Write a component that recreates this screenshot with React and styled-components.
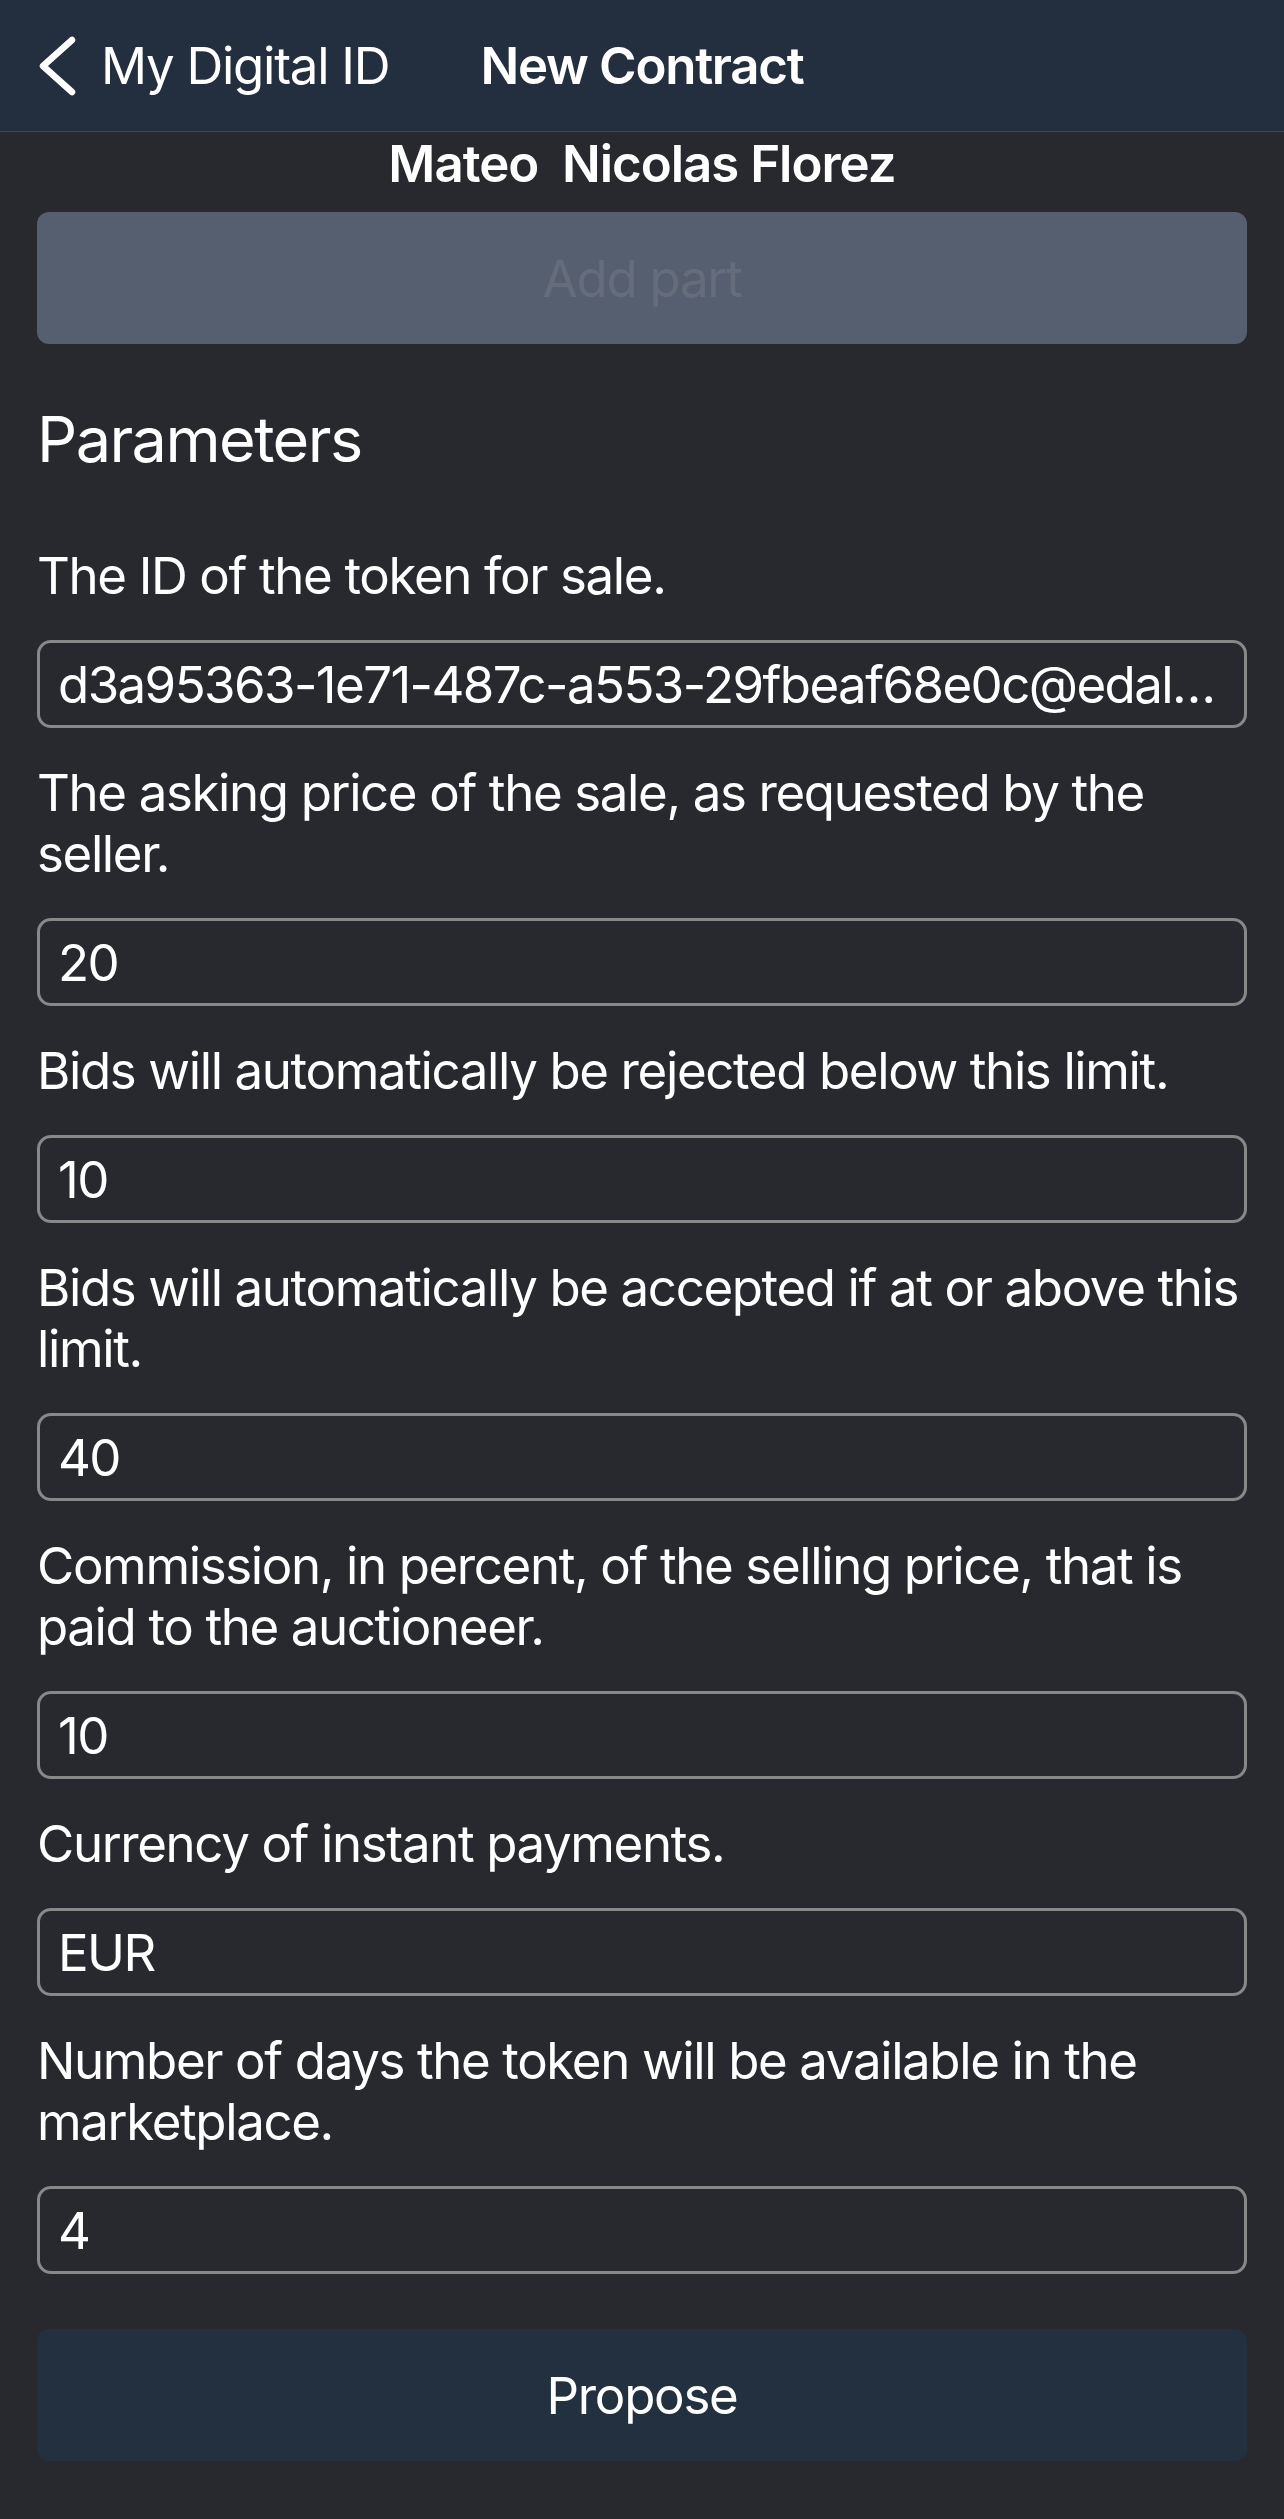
import React from "react";
import styled, { createGlobalStyle } from "styled-components";

const Global = createGlobalStyle`
  html, body { margin: 0; padding: 0; background: #28292f; }
  body { font-family: Inter, "Noto Sans", "Liberation Sans", sans-serif; -webkit-font-smoothing: antialiased; }
  * { box-sizing: border-box; }
`;

const Page = styled.div`
  width: 1284px;
  min-height: 2519px;
  background: #28292f;
  color: #ffffff;
  display: flex;
  flex-direction: column;
`;

const NavBar = styled.header`
  height: 132px;
  background: #232e3e;
  border-bottom: 1px solid #3b4250;
  display: grid;
  grid-template-columns: 1fr auto 1fr;
  align-items: center;
`;

const BackButton = styled.div`
  display: flex;
  align-items: center;
  gap: 24px;
  padding-left: 37px;
  font-size: 51px;
  letter-spacing: -0.025em;
  color: #ffffff;
  white-space: nowrap;
`;

const Title = styled.h1`
  margin: 0;
  font-size: 51px;
  font-weight: 600;
  letter-spacing: -0.025em;
  color: #ffffff;
  white-space: nowrap;
`;

const Content = styled.main`
  display: flex;
  flex-direction: column;
  padding: 1px 37px 56px 37px;
`;

const Name = styled.div`
  font-size: 51px;
  font-weight: 600;
  line-height: 61px;
  letter-spacing: -0.02em;
  text-align: center;
  white-space: pre;
  margin-bottom: 18px;
`;

const WideButton = styled.button`
  height: 132px;
  width: 100%;
  border: none;
  border-radius: 12px;
  font-family: inherit;
  font-size: 51px;
  letter-spacing: -0.025em;
  background: ${(p) => (p.$disabled ? "#565f6f" : "#22303f")};
  color: ${(p) => (p.$disabled ? "#666d7a" : "#ffffff")};
`;

const SectionTitle = styled.h2`
  margin: 59px 0 70px 0;
  font-size: 63px;
  line-height: 72px;
  font-weight: 400;
  letter-spacing: -0.025em;
`;

const Fields = styled.div`
  display: flex;
  flex-direction: column;
  gap: 34px;
`;

const Field = styled.div`
  display: flex;
  flex-direction: column;
  gap: 34px;
`;

const Label = styled.div`
  font-size: 51px;
  line-height: 61px;
  letter-spacing: -0.027em;
  color: #ffffff;
`;

const Input = styled.input`
  height: 88px;
  width: 100%;
  border: 3px solid #888888;
  border-radius: 14px;
  background: transparent;
  color: #ffffff;
  font-family: inherit;
  font-size: 51px;
  letter-spacing: -0.031em;
  padding: 0 14px 0 18px;
  text-overflow: ellipsis;
  outline: none;
`;

const Footer = styled.div`
  margin-top: 55px;
`;

const Chevron = () => (
  <svg width="40" height="60" viewBox="0 0 40 60" fill="none">
    <path d="M35 4 L6 30 L35 56" stroke="#ffffff" strokeWidth="6.5" strokeLinecap="round" strokeLinejoin="round" />
  </svg>
);

const fields = [
  { label: "The ID of the token for sale.", value: "d3a95363-1e71-487c-a553-29fbeaf68e0c@edaler.lab.tagroot.io" },
  { label: "The asking price of the sale, as requested by the seller.", value: "20" },
  { label: "Bids will automatically be rejected below this limit.", value: "10" },
  { label: "Bids will automatically be accepted if at or above this limit.", value: "40" },
  { label: "Commission, in percent, of the selling price, that is paid to the auctioneer.", value: "10" },
  { label: "Currency of instant payments.", value: "EUR" },
  { label: "Number of days the token will be available in the marketplace.", value: "4" },
];

export default function App() {
  return (
    <>
      <Global />
      <Page>
        <NavBar>
          <BackButton>
            <Chevron />
            My Digital ID
          </BackButton>
          <Title>New Contract</Title>
          <div />
        </NavBar>
        <Content>
          <Name>{"Mateo  Nicolas Florez"}</Name>
          <WideButton $disabled>Add part</WideButton>
          <SectionTitle>Parameters</SectionTitle>
          <Fields>
            {fields.map((f, i) => (
              <Field key={i}>
                <Label>{f.label}</Label>
                <Input readOnly value={f.value} />
              </Field>
            ))}
          </Fields>
          <Footer>
            <WideButton>Propose</WideButton>
          </Footer>
        </Content>
      </Page>
    </>
  );
}
